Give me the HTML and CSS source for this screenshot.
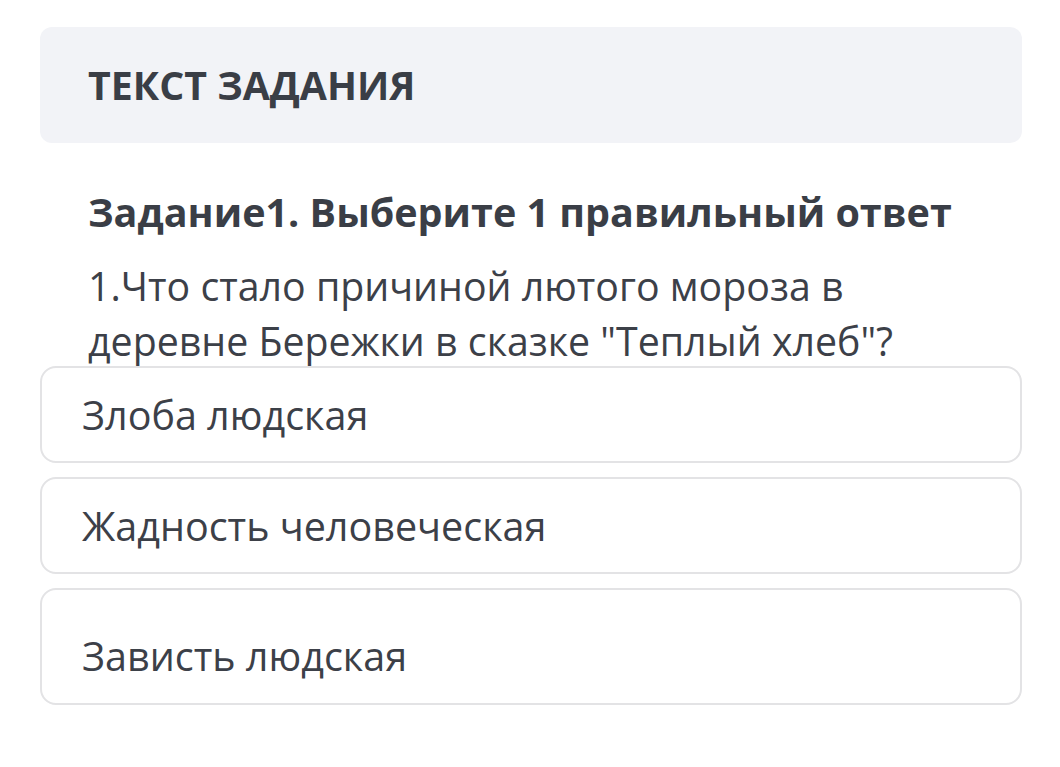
FILE: index.html
```html
<!DOCTYPE html>
<html lang="ru">
<head>
<meta charset="utf-8">
<link rel="stylesheet" href="styles.css">
</head>
<body>
<div class="page">
  <div class="banner"><span class="banner-title">ТЕКСТ ЗАДАНИЯ</span></div>
  <div class="task">
    <div class="task-title">Задание1. Выберите 1 правильный ответ</div>
    <div class="question">1.Что стало причиной лютого мороза в деревне Бережки в сказке "Теплый хлеб"?</div>
  </div>
  <div class="options">
    <div class="option">Злоба людская</div>
    <div class="option">Жадность человеческая</div>
    <div class="option option-tall">Зависть людская</div>
  </div>
</div>
</body>
</html>
```

FILE: styles.css
```css
html, body {
  margin: 0;
  padding: 0;
  background: #ffffff;
}
body {
  font-family: "Open Sans", "Noto Sans", sans-serif;
  color: #3c4048;
}
.page {
  padding: 27px 38px 0 40px;
  width: 982px;
}
.banner {
  background: #f2f3f7;
  border-radius: 12px;
  height: 116px;
  display: flex;
  align-items: center;
  padding-left: 48px;
  box-sizing: border-box;
}
.banner-title {
  font-weight: 700;
  font-size: 39.3px;
  color: #3a3e46;
}
.task {
  padding: 41px 48px 0 48px;
}
.task-title {
  font-weight: 700;
  font-size: 39.5px;
  line-height: 56px;
  color: #3a3e46;
}
.question {
  font-size: 39.3px;
  line-height: 55px;
  margin-top: 19px;
  margin-right: 60px;
}
.options {
  display: flex;
  flex-direction: column;
  gap: 14px;
  margin-top: -3px;
}
.option {
  border: 2px solid #e3e3e5;
  border-radius: 16px;
  height: 97px;
  box-sizing: border-box;
  display: flex;
  align-items: center;
  padding-left: 40px;
  font-size: 39.5px;
}
.option-tall {
  height: 117px;
  padding-top: 18px;
}
```
